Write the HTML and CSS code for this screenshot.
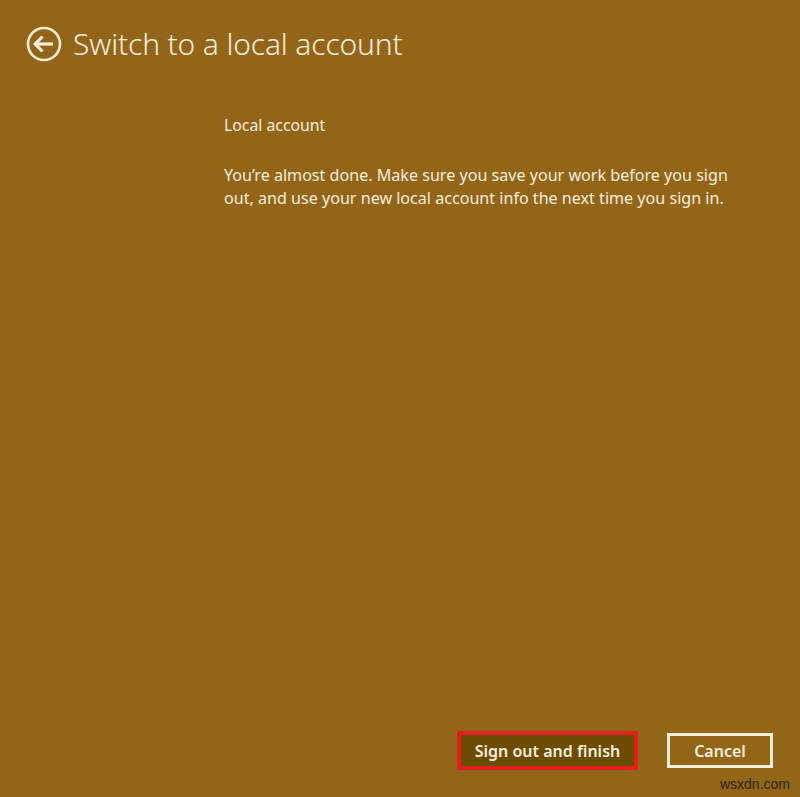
FILE: index.html
```html
<!DOCTYPE html>
<html>
<head>
<meta charset="utf-8">
<link rel="stylesheet" href="styles.css">
</head>
<body>
<div class="page">
  <header class="header">
    <svg class="back" width="36" height="36" viewBox="0 0 36 36">
      <circle cx="18" cy="18" r="16" fill="none" stroke="#f6eedd" stroke-width="2.6"/>
      <path d="M9.5 18 H27" stroke="#f6eedd" stroke-width="3.2" fill="none"/>
      <path d="M16.5 10.5 L9.2 18 L16.5 25.5" stroke="#f6eedd" stroke-width="3.2" fill="none" stroke-linejoin="miter"/>
    </svg>
    <h1 class="title">Switch to a local account</h1>
  </header>
  <main class="content">
    <p class="label">Local account</p>
    <p class="body">You’re almost done. Make sure you save your work before you sign out, and use your new local account info the next time you sign in.</p>
  </main>
  <footer class="footer">
    <button class="btn primary">Sign out and finish</button>
    <button class="btn secondary">Cancel</button>
  </footer>
  <div class="watermark">wsxdn.com</div>
</div>
</body>
</html>
```
FILE: styles.css
```css
html, body {
  margin: 0;
  padding: 0;
  background: #936518;
}
.page {
  position: relative;
  width: 800px;
  height: 797px;
  display: flex;
  flex-direction: column;
  font-family: "Noto Sans", "Open Sans", sans-serif;
  color: #f6eedd;
}
.header {
  display: flex;
  align-items: center;
  gap: 11px;
  padding: 26px 0 0 26px;
  height: 36px;
}
.back { flex: none; }
.title {
  margin: 0;
  font-weight: 300;
  font-size: 30px;
  line-height: 36px;
  letter-spacing: -0.15px;
}
.content {
  padding: 53px 0 0 224px;
  flex: 1;
}
.label {
  margin: 0;
  font-size: 15.8px;
  line-height: 20px;
}
.body {
  margin: 29px 0 0 0;
  width: 520px;
  font-size: 16.1px;
  line-height: 22.5px;
}
.footer {
  display: flex;
  justify-content: flex-end;
  align-items: center;
  gap: 29px;
  padding: 0 27px 27px 0;
}
.btn {
  font-family: "Noto Sans", "Open Sans", sans-serif;
  font-size: 16px;
  color: #f6eedd;
  box-sizing: border-box;
  padding: 0;
}
.primary {
  width: 181px;
  height: 39px;
  background: #6b4c00;
  border: 4px solid #e2211f;
  font-weight: 600;
}
.secondary {
  width: 106px;
  height: 35px;
  background: transparent;
  border: 3px solid #f6eedd;
  font-weight: 600;
}
.watermark {
  position: absolute;
  right: 10px;
  bottom: 5px;
  font-family: "Liberation Sans", sans-serif;
  font-size: 14px;
  color: #2e2410;
}
```
